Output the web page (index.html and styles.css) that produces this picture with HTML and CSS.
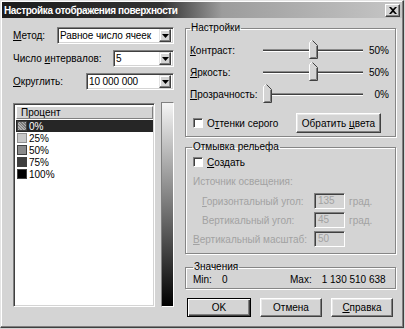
FILE: index.html
```html
<!DOCTYPE html>
<html lang="ru">

<head>
    <meta charset="UTF-8">
    <title>Настройка отображения поверхности</title>
    <link rel="stylesheet" href="styles.css">
</head>

<body>
    <div class="window">
        <div class="titlebar">
            <span class="title">Настройка отображения поверхности</span>
            <span class="close">
                <svg width="8" height="7" viewBox="0 0 8 7"><path d="M0 0h2l2 2 2-2h2L5 3.5 8 7H6L4 5 2 7H0l3-3.5z" fill="#000"/></svg>
            </span>
        </div>

        <div class="content">
            <div class="left">
                <div class="field">
                    <label><u>М</u>етод:</label>
                    <div class="combo combo-method">
                        <span class="combo-text">Равное число ячеек</span>
                        <span class="drop"><svg width="7" height="4" viewBox="0 0 7 4"><path d="M0 0h7L3.5 4z" fill="#000"/></svg></span>
                    </div>
                </div>
                <div class="field">
                    <label>Число <u>и</u>нтервалов:</label>
                    <div class="combo combo-count">
                        <span class="combo-text">5</span>
                        <span class="drop"><svg width="7" height="4" viewBox="0 0 7 4"><path d="M0 0h7L3.5 4z" fill="#000"/></svg></span>
                    </div>
                </div>
                <div class="field">
                    <label><u>О</u>круглить:</label>
                    <div class="combo combo-round">
                        <span class="combo-text">10 000 000</span>
                        <span class="drop"><svg width="7" height="4" viewBox="0 0 7 4"><path d="M0 0h7L3.5 4z" fill="#000"/></svg></span>
                    </div>
                </div>

                <div class="legend-area">
                    <div class="list">
                        <div class="list-head">Процент</div>
                        <div class="list-row selected"><span class="swatch swatch-0"></span>0%</div>
                        <div class="list-row"><span class="swatch swatch-25"></span>25%</div>
                        <div class="list-row"><span class="swatch swatch-50"></span>50%</div>
                        <div class="list-row"><span class="swatch swatch-75"></span>75%</div>
                        <div class="list-row"><span class="swatch swatch-100"></span>100%</div>
                    </div>
                    <div class="gradient"></div>
                </div>
            </div>

            <div class="right">
                <fieldset class="group group-settings">
                    <legend>Настройки</legend>
                    <div class="slider-row">
                        <span class="slider-label"><u>К</u>онтраст:</span>
                        <div class="track"><span class="thumb" style="left: 46px"><svg width="9" height="19" viewBox="0 0 9 19"><path d="M0.5 18.5V2.5L2.5 0.5h1l5 5v13z" fill="#d4d4d4"/><path d="M0.5 18V2.5L2.5 0.5h1" fill="none" stroke="#fff"/><path d="M3.5 0.5l5 5v13h-8" fill="none" stroke="#404040"/><path d="M7.5 6v11.5h-6" fill="none" stroke="#808080"/></svg></span></div>
                        <span class="value">50%</span>
                    </div>
                    <div class="slider-row">
                        <span class="slider-label"><u>Я</u>ркость:</span>
                        <div class="track"><span class="thumb" style="left: 46px"><svg width="9" height="19" viewBox="0 0 9 19"><path d="M0.5 18.5V2.5L2.5 0.5h1l5 5v13z" fill="#d4d4d4"/><path d="M0.5 18V2.5L2.5 0.5h1" fill="none" stroke="#fff"/><path d="M3.5 0.5l5 5v13h-8" fill="none" stroke="#404040"/><path d="M7.5 6v11.5h-6" fill="none" stroke="#808080"/></svg></span></div>
                        <span class="value">50%</span>
                    </div>
                    <div class="slider-row">
                        <span class="slider-label"><u>П</u>розрачность:</span>
                        <div class="track"><span class="thumb" style="left: 0px"><svg width="9" height="19" viewBox="0 0 9 19"><path d="M0.5 18.5V2.5L2.5 0.5h1l5 5v13z" fill="#d4d4d4"/><path d="M0.5 18V2.5L2.5 0.5h1" fill="none" stroke="#fff"/><path d="M3.5 0.5l5 5v13h-8" fill="none" stroke="#404040"/><path d="M7.5 6v11.5h-6" fill="none" stroke="#808080"/></svg></span></div>
                        <span class="value">0%</span>
                    </div>
                    <div class="check-row">
                        <label class="check"><span class="box"></span><span>О<u>т</u>тенки серого</span></label>
                        <button class="btn btn-invert">Обратить <u>ц</u>вета</button>
                    </div>
                </fieldset>

                <fieldset class="group group-relief">
                    <legend>Отмывка рельефа</legend>
                    <label class="check"><span class="box"></span><span><u>С</u>оздать</span></label>
                    <div class="disabled light-title">Источник освещения:</div>
                    <div class="light-grid">
                        <span class="disabled indent"><u>Г</u>оризонтальный угол:</span>
                        <span class="num-input">135</span>
                        <span class="disabled">град.</span>
                        <span class="disabled indent">Вертикальный угол:</span>
                        <span class="num-input">45</span>
                        <span class="disabled">град.</span>
                        <span class="disabled"><u>В</u>ертикальный масштаб:</span>
                        <span class="num-input">50</span>
                        <span></span>
                    </div>
                </fieldset>

                <fieldset class="group group-values">
                    <legend>Значения</legend>
                    <div class="values-row">
                        <span class="stat stat-min">Min:<b>0</b></span>
                        <span class="stat stat-max">Max:<b>1 130 510 638</b></span>
                    </div>
                </fieldset>

                <div class="buttons">
                    <button class="btn btn-default">OK</button>
                    <button class="btn">Отмена</button>
                    <button class="btn"><u>С</u>правка</button>
                </div>
            </div>
        </div>
    </div>
</body>

</html>
```

FILE: styles.css
```css
/* Окно в стиле Windows 98, в оттенках серого */
body {
    margin: 0;
    background-color: #d4d4d4;
    font-family: "Liberation Sans", Arial, sans-serif;
    font-size: 10px;
    color: #000000;
}

u {
    text-decoration: underline;
}

.window {
    width: 404px;
    height: 328px;
    box-sizing: border-box;
    padding: 1px;
    border: 1px solid;
    border-color: #e4e4e4 #404040 #404040 #e4e4e4;
    box-shadow: inset -1px -1px 0 #808080, inset 1px 1px 0 #ffffff;
    background-color: #d4d4d4;
}

.titlebar {
    display: flex;
    align-items: center;
    justify-content: space-between;
    height: 16px;
    padding: 0 2px 0 2px;
    background: linear-gradient(to right, #1c1c1c 0%, #333333 40%, #9c9c9c 55%, #c6c6c6 100%);
}

.title {
    color: #ffffff;
    font-weight: bold;
    font-size: 10px;
    letter-spacing: -0.4px;
}

.close {
    display: flex;
    align-items: center;
    justify-content: center;
    width: 13px;
    height: 11px;
    background-color: #d4d4d4;
    border: 1px solid;
    border-color: #ffffff #404040 #404040 #ffffff;
    box-shadow: inset -1px -1px 0 #808080;
}

.content {
    display: flex;
    gap: 11px;
    padding: 0 6px 0 11px;
}

/* Левая колонка */
.left {
    width: 161px;
    padding-top: 9px;
}

.field {
    display: flex;
    align-items: center;
    justify-content: space-between;
    height: 17px;
    margin-bottom: 6px;
}

.combo {
    display: flex;
    align-items: center;
    height: 17px;
    box-sizing: border-box;
    border: 1px solid;
    border-color: #808080 #ffffff #ffffff #808080;
    box-shadow: inset 1px 1px 0 #404040, inset -1px -1px 0 #d4d4d4;
    background-color: #ffffff;
    padding: 2px 2px 2px 2px;
}

.combo-method {
    width: 117px;
}

.combo-count {
    width: 61px;
}

.combo-round {
    width: 88px;
}

.combo-text {
    flex: 1;
    white-space: nowrap;
    overflow: hidden;
    letter-spacing: -0.1px;
}

.drop {
    display: flex;
    align-items: center;
    justify-content: center;
    width: 12px;
    height: 13px;
    box-sizing: border-box;
    background-color: #d4d4d4;
    border: 1px solid;
    border-color: #e4e4e4 #404040 #404040 #e4e4e4;
    box-shadow: inset -1px -1px 0 #808080, inset 1px 1px 0 #ffffff;
}

.legend-area {
    display: flex;
    gap: 6px;
    margin-top: 13px;
}

.list {
    width: 142px;
    height: 204px;
    box-sizing: border-box;
    border: 1px solid;
    border-color: #808080 #ffffff #ffffff #808080;
    box-shadow: inset 1px 1px 0 #404040, inset -1px -1px 0 #d4d4d4;
    background-color: #ffffff;
    padding: 2px 1px 2px 2px;
}

.list-head {
    height: 13px;
    box-sizing: border-box;
    padding-left: 4px;
    line-height: 11px;
    background-color: #d4d4d4;
    border: 1px solid;
    border-color: #ffffff #808080 #808080 #ffffff;
    margin-bottom: 1px;
}

.list-row {
    display: flex;
    align-items: center;
    gap: 2px;
    height: 12px;
    padding-left: 1px;
}

.list-row.selected {
    background-color: #262626;
    color: #ffffff;
}

.swatch {
    width: 8px;
    height: 8px;
    border: 1px solid #404040;
}

.swatch-0 {
    background-color: #9a9a9a;
    background-image: repeating-linear-gradient(45deg, #b0b0b0 0 1px, #7a7a7a 1px 2px);
}

.swatch-25 {
    background-color: #c8c8c8;
    border-color: #909090;
}

.swatch-50 {
    background-color: #8a8a8a;
}

.swatch-75 {
    background-color: #3e3e3e;
}

.swatch-100 {
    background-color: #000000;
}

.gradient {
    width: 13px;
    height: 205px;
    box-sizing: border-box;
    margin-top: -1px;
    border: 1px solid;
    border-color: #808080 #ffffff #ffffff #808080;
    background: linear-gradient(to bottom, #f4f4f4, #000000);
}

/* Правая колонка */
.right {
    width: 211px;
    padding-top: 4px;
}

.group {
    margin: 0;
    min-width: 0;
    border: 1px solid #868686;
    box-shadow: 1px 1px 0 #ffffff, inset 1px 1px 0 #ffffff;
    padding: 0 6px 3px 4px;
}

.group legend {
    padding: 0 1px;
    line-height: 12px;
}

.slider-row {
    display: flex;
    align-items: center;
    height: 22px;
}

.slider-row:first-of-type {
    margin-top: 5px;
}

.slider-label {
    width: 73px;
}

.track {
    position: relative;
    width: 100px;
    height: 1px;
    background-color: #404040;
    border-top: 1px solid #8a8a8a;
    border-bottom: 1px solid #ffffff;
}

.thumb {
    position: absolute;
    top: -10px;
    display: block;
    width: 9px;
    height: 19px;
}

.thumb svg {
    display: block;
}

.value {
    flex: 1;
    text-align: right;
}

.check-row {
    display: flex;
    align-items: center;
    justify-content: space-between;
    margin-top: 8px;
    padding-left: 3px;
    padding-right: 8px;
}

.check {
    display: flex;
    align-items: center;
    gap: 4px;
    height: 14px;
}

.box {
    width: 8px;
    height: 8px;
    border: 1px solid;
    border-color: #808080 #ffffff #ffffff #808080;
    box-shadow: inset 1px 1px 0 #404040;
    background-color: #ffffff;
}

.btn {
    height: 20px;
    padding: 0;
    white-space: nowrap;
    font-family: inherit;
    font-size: 10px;
    color: #000000;
    background-color: #d4d4d4;
    border: 1px solid;
    border-color: #ffffff #404040 #404040 #ffffff;
    box-shadow: inset -1px -1px 0 #808080, inset 1px 1px 0 #e8e8e8;
}

.btn-invert {
    width: 85px;
}

.group-relief {
    margin-top: 4px;
    padding-left: 7px;
    padding-bottom: 6px;
}

.group-relief legend {
    margin-left: -1px;
}

.group-relief .check {
    margin-top: 2px;
}

.disabled {
    color: #a2a2a2;
}

.light-title {
    margin-top: 6px;
    height: 14px;
    line-height: 14px;
}

.light-grid {
    display: grid;
    grid-template-columns: 117px 31px auto;
    grid-auto-rows: 16px;
    column-gap: 4px;
    row-gap: 3px;
    align-items: center;
    margin-top: 4px;
}

.indent {
    padding-left: 9px;
}

.num-input {
    height: 16px;
    box-sizing: border-box;
    padding: 1px 3px;
    line-height: 12px;
    color: #a2a2a2;
    border: 1px solid;
    border-color: #808080 #ffffff #ffffff #808080;
    box-shadow: inset 1px 1px 0 #404040;
}

.group-values {
    margin-top: 7px;
    padding-left: 7px;
    padding-bottom: 2px;
}

.values-row {
    display: flex;
    height: 12px;
    margin-top: 1px;
}

.stat b {
    font-weight: normal;
    margin-left: 10px;
}

.stat-min {
    width: 97px;
}

.buttons {
    display: flex;
    justify-content: space-between;
    margin-top: 9px;
    padding: 0 3px 0 2px;
}

.buttons .btn {
    width: 62px;
    height: 19px;
}

.buttons .btn-default {
    width: 64px;
    border: 1px solid #000000;
    box-shadow: inset 1px 1px 0 #ffffff, inset -1px -1px 0 #404040, inset -2px -2px 0 #808080;
}
```
